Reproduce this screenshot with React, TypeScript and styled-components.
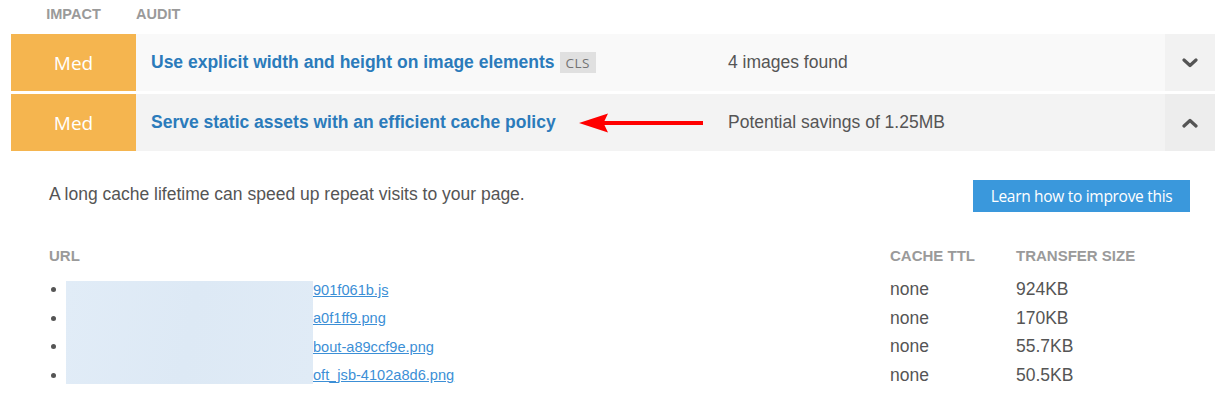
import styled, { createGlobalStyle } from "styled-components";

const GlobalStyle = createGlobalStyle`
  body {
    margin: 0;
    background: #ffffff;
    font-family: "Liberation Sans", Arial, sans-serif;
  }
`;

const Page = styled.div`
  width: 1204px;
  padding-left: 11px;
`;

const HeaderRow = styled.div`
  display: grid;
  grid-template-columns: 125px 1fr;
  height: 34px;
  align-items: start;
  padding-top: 6px;
  box-sizing: border-box;
  font-size: 14.5px;
  font-weight: bold;
  color: #9a9a9a;
`;

const HeaderImpact = styled.div`
  text-align: center;
`;

const AuditRow = styled.div<{ $open?: boolean }>`
  display: grid;
  grid-template-columns: 125px 577px 1fr 50px;
  height: 57px;
  margin-bottom: 3px;
  background: ${(p) => (p.$open ? "#f3f3f3" : "#f9f9f9")};
`;

const Impact = styled.div`
  background: #f5b54f;
  color: #ffffff;
  font-family: "Open Sans", sans-serif;
  font-size: 19px;
  display: flex;
  align-items: center;
  justify-content: center;
`;

const TitleCell = styled.div`
  display: flex;
  align-items: center;
  padding-left: 15px;
`;

const Title = styled.span`
  font-size: 17.5px;
  font-weight: bold;
  color: #2b7bbb;
`;

const Tag = styled.span`
  margin-left: 5px;
  height: 21px;
  padding: 0 6px;
  display: inline-flex;
  align-items: center;
  background: #e0e0e0;
  color: #737373;
  font-family: "Open Sans", sans-serif;
  font-size: 13.5px;
  letter-spacing: 0.5px;
`;

const Summary = styled.div`
  display: flex;
  align-items: center;
  padding-left: 15px;
  font-size: 17.5px;
  color: #555555;
`;

const Toggle = styled.div<{ $open?: boolean }>`
  display: flex;
  align-items: center;
  justify-content: center;
  background: ${(p) => (p.$open ? "#ededed" : "#f2f2f2")};
`;

const Details = styled.div`
  padding: 26px 25px 0 38px;
`;

const DetailsTop = styled.div`
  display: flex;
  justify-content: space-between;
  align-items: center;
`;

const Description = styled.p`
  margin: 0 0 3px;
  font-size: 17.5px;
  color: #555555;
`;

const LearnButton = styled.a`
  width: 217px;
  height: 32px;
  display: flex;
  align-items: center;
  justify-content: center;
  background: #3a98dc;
  color: #ffffff;
  font-family: "Open Sans", sans-serif;
  font-size: 15.5px;
  letter-spacing: -0.3px;
  text-decoration: none;
`;

const Table = styled.div`
  margin-top: 35px;
  display: grid;
  grid-template-columns: 841px 126px 1fr;
`;

const ColHead = styled.div`
  font-size: 15px;
  font-weight: bold;
  color: #9a9a9a;
  height: 28.5px;
`;

const UrlList = styled.ul`
  position: relative;
  margin: 0;
  padding: 0;
  list-style: none;
`;

const Redaction = styled.div`
  position: absolute;
  left: 17px;
  top: 5px;
  width: 247px;
  height: 103px;
  background: linear-gradient(100deg, #e1ecf7 0%, #dde9f5 50%, #e0ebf6 100%);
`;

const UrlItem = styled.li`
  height: 28.5px;
  display: flex;
  align-items: center;
  &::before {
    content: "";
    width: 5px;
    height: 5px;
    border-radius: 50%;
    background: #555555;
    margin: 0 257px 0 2px;
  }
`;

const UrlLink = styled.a`
  font-size: 14.6px;
  color: #3c8fd6;
  text-decoration: underline;
`;

const Cell = styled.div`
  height: 28.5px;
  display: flex;
  align-items: center;
  font-size: 17.5px;
  color: #555555;
`;

const Column = styled.div``;

const Chevron = ({ up }: { up?: boolean }) => (
  <svg width="16" height="10" viewBox="0 0 16 10">
    <polyline
      points={up ? "2,8 8,2.5 14,8" : "2,2 8,7.5 14,2"}
      fill="none"
      stroke="#555555"
      strokeWidth="3.2"
      strokeLinecap="round"
      strokeLinejoin="round"
    />
  </svg>
);

const Arrow = () => (
  <svg width="126" height="22" viewBox="0 0 126 22" style={{ marginLeft: 22 }}>
    <rect x="24" y="9" width="101" height="4" fill="#ff0000" />
    <polygon points="1,11 30,1.5 25.5,11 30,20.5" fill="#ff0000" />
  </svg>
);

const resources = [
  { url: "901f061b.js", ttl: "none", size: "924KB" },
  { url: "a0f1ff9.png", ttl: "none", size: "170KB" },
  { url: "bout-a89ccf9e.png", ttl: "none", size: "55.7KB" },
  { url: "oft_jsb-4102a8d6.png", ttl: "none", size: "50.5KB" },
];

export default function App() {
  return (
    <Page>
      <GlobalStyle />
      <HeaderRow>
        <HeaderImpact>IMPACT</HeaderImpact>
        <div>AUDIT</div>
      </HeaderRow>

      <AuditRow>
        <Impact>Med</Impact>
        <TitleCell>
          <Title>Use explicit width and height on image elements</Title>
          <Tag>CLS</Tag>
        </TitleCell>
        <Summary>4 images found</Summary>
        <Toggle>
          <Chevron />
        </Toggle>
      </AuditRow>

      <AuditRow $open>
        <Impact>Med</Impact>
        <TitleCell>
          <Title>Serve static assets with an efficient cache policy</Title>
          <Arrow />
        </TitleCell>
        <Summary>Potential savings of 1.25MB</Summary>
        <Toggle $open>
          <Chevron up />
        </Toggle>
      </AuditRow>

      <Details>
        <DetailsTop>
          <Description>A long cache lifetime can speed up repeat visits to your page.</Description>
          <LearnButton href="#">Learn how to improve this</LearnButton>
        </DetailsTop>

        <Table>
          <Column>
            <ColHead>URL</ColHead>
            <UrlList>
              <Redaction />
              {resources.map((r) => (
                <UrlItem key={r.url}>
                  <UrlLink href="#">{r.url}</UrlLink>
                </UrlItem>
              ))}
            </UrlList>
          </Column>
          <Column>
            <ColHead>CACHE TTL</ColHead>
            {resources.map((r) => (
              <Cell key={r.url}>{r.ttl}</Cell>
            ))}
          </Column>
          <Column>
            <ColHead>TRANSFER SIZE</ColHead>
            {resources.map((r) => (
              <Cell key={r.url}>{r.size}</Cell>
            ))}
          </Column>
        </Table>
      </Details>
    </Page>
  );
}
